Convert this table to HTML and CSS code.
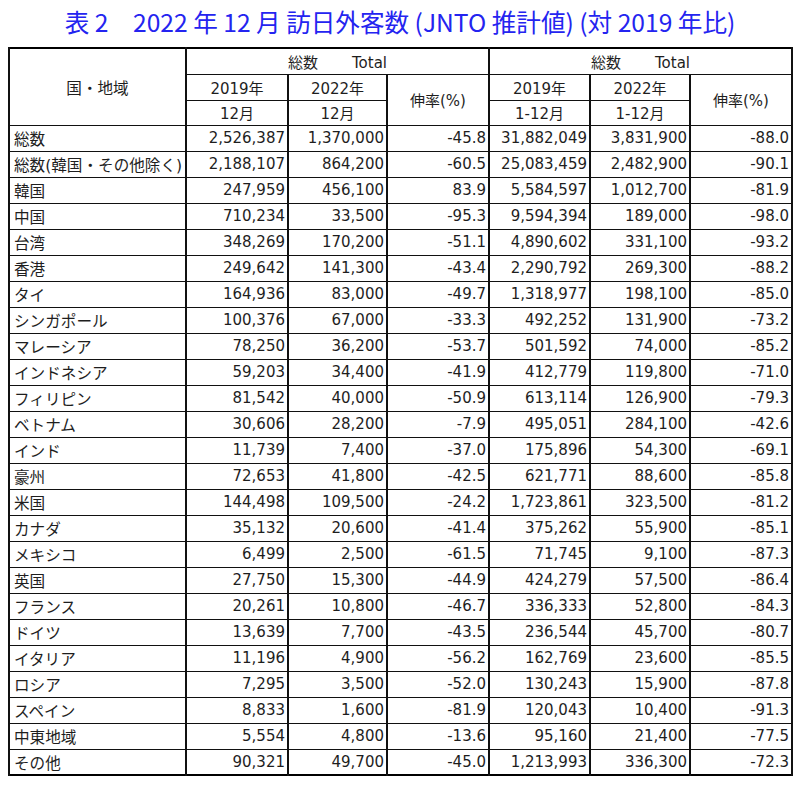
FILE: index.html
```html
<!DOCTYPE html>
<html lang="ja">
<head>
<meta charset="utf-8">
<title>表2 訪日外客数</title>
<link rel="stylesheet" href="styles.css">
</head>
<body>
<h1 class="title">表 2　2022 年 12 月 訪日外客数 (JNTO 推計値) (対 2019 年比)</h1>
<table class="stats">
<colgroup>
<col class="c-name"><col class="c-a"><col class="c-b"><col class="c-c"><col class="c-d"><col class="c-e"><col class="c-f">
</colgroup>
<thead>
<tr class="h1">
<th rowspan="3" class="name-h">国・地域</th>
<th colspan="3" class="grp">総数<span class="total">Total</span></th>
<th colspan="3" class="grp">総数<span class="total">Total</span></th>
</tr>
<tr class="h2">
<th>2019年</th><th>2022年</th><th rowspan="2">伸率(%)</th>
<th>2019年</th><th>2022年</th><th rowspan="2">伸率(%)</th>
</tr>
<tr class="h3">
<th>12月</th><th>12月</th>
<th>1-12月</th><th>1-12月</th>
</tr>
</thead>
<tbody>
<tr><td>総数</td><td>2,526,387</td><td>1,370,000</td><td>-45.8</td><td>31,882,049</td><td>3,831,900</td><td>-88.0</td></tr>
<tr><td>総数(韓国・その他除く)</td><td>2,188,107</td><td>864,200</td><td>-60.5</td><td>25,083,459</td><td>2,482,900</td><td>-90.1</td></tr>
<tr><td>韓国</td><td>247,959</td><td>456,100</td><td>83.9</td><td>5,584,597</td><td>1,012,700</td><td>-81.9</td></tr>
<tr><td>中国</td><td>710,234</td><td>33,500</td><td>-95.3</td><td>9,594,394</td><td>189,000</td><td>-98.0</td></tr>
<tr><td>台湾</td><td>348,269</td><td>170,200</td><td>-51.1</td><td>4,890,602</td><td>331,100</td><td>-93.2</td></tr>
<tr><td>香港</td><td>249,642</td><td>141,300</td><td>-43.4</td><td>2,290,792</td><td>269,300</td><td>-88.2</td></tr>
<tr><td>タイ</td><td>164,936</td><td>83,000</td><td>-49.7</td><td>1,318,977</td><td>198,100</td><td>-85.0</td></tr>
<tr><td>シンガポール</td><td>100,376</td><td>67,000</td><td>-33.3</td><td>492,252</td><td>131,900</td><td>-73.2</td></tr>
<tr><td>マレーシア</td><td>78,250</td><td>36,200</td><td>-53.7</td><td>501,592</td><td>74,000</td><td>-85.2</td></tr>
<tr><td>インドネシア</td><td>59,203</td><td>34,400</td><td>-41.9</td><td>412,779</td><td>119,800</td><td>-71.0</td></tr>
<tr><td>フィリピン</td><td>81,542</td><td>40,000</td><td>-50.9</td><td>613,114</td><td>126,900</td><td>-79.3</td></tr>
<tr><td>ベトナム</td><td>30,606</td><td>28,200</td><td>-7.9</td><td>495,051</td><td>284,100</td><td>-42.6</td></tr>
<tr><td>インド</td><td>11,739</td><td>7,400</td><td>-37.0</td><td>175,896</td><td>54,300</td><td>-69.1</td></tr>
<tr><td>豪州</td><td>72,653</td><td>41,800</td><td>-42.5</td><td>621,771</td><td>88,600</td><td>-85.8</td></tr>
<tr><td>米国</td><td>144,498</td><td>109,500</td><td>-24.2</td><td>1,723,861</td><td>323,500</td><td>-81.2</td></tr>
<tr><td>カナダ</td><td>35,132</td><td>20,600</td><td>-41.4</td><td>375,262</td><td>55,900</td><td>-85.1</td></tr>
<tr><td>メキシコ</td><td>6,499</td><td>2,500</td><td>-61.5</td><td>71,745</td><td>9,100</td><td>-87.3</td></tr>
<tr><td>英国</td><td>27,750</td><td>15,300</td><td>-44.9</td><td>424,279</td><td>57,500</td><td>-86.4</td></tr>
<tr><td>フランス</td><td>20,261</td><td>10,800</td><td>-46.7</td><td>336,333</td><td>52,800</td><td>-84.3</td></tr>
<tr><td>ドイツ</td><td>13,639</td><td>7,700</td><td>-43.5</td><td>236,544</td><td>45,700</td><td>-80.7</td></tr>
<tr><td>イタリア</td><td>11,196</td><td>4,900</td><td>-56.2</td><td>162,769</td><td>23,600</td><td>-85.5</td></tr>
<tr><td>ロシア</td><td>7,295</td><td>3,500</td><td>-52.0</td><td>130,243</td><td>15,900</td><td>-87.8</td></tr>
<tr><td>スペイン</td><td>8,833</td><td>1,600</td><td>-81.9</td><td>120,043</td><td>10,400</td><td>-91.3</td></tr>
<tr><td>中東地域</td><td>5,554</td><td>4,800</td><td>-13.6</td><td>95,160</td><td>21,400</td><td>-77.5</td></tr>
<tr><td>その他</td><td>90,321</td><td>49,700</td><td>-45.0</td><td>1,213,993</td><td>336,300</td><td>-72.3</td></tr>
</tbody>
</table>
</body>
</html>
```

FILE: styles.css
```css
html, body {
  margin: 0;
  padding: 0;
  background: #fff;
}

body {
  font-family: "DejaVu Sans", "Noto Sans CJK JP", sans-serif;
  color: #1e1e1e;
}

.title {
  margin: 0;
  height: 47px;
  line-height: 43px;
  text-align: center;
  font-family: "Noto Sans CJK JP", sans-serif;
  font-weight: normal;
  font-size: 24.6px;
  color: #2424f0;
  white-space: pre;
}

.stats {
  margin-left: 8px;
  width: 783px;
  table-layout: fixed;
  border-collapse: collapse;
  border: 2px solid #000;
  font-size: 15px;
}

.c-name { width: 177px; }
.c-a { width: 102px; }
.c-b { width: 99px; }
.c-c { width: 102px; }
.c-d { width: 101px; }
.c-e { width: 100px; }
.c-f { width: 102px; }

.stats th,
.stats td {
  border-top: 1px solid #111;
  border-bottom: 1px solid #111;
  border-left: 2px solid #111;
  border-right: 2px solid #111;
  padding: 0 3px;
  white-space: nowrap;
  overflow: hidden;
}

.stats th {
  font-weight: normal;
  text-align: center;
  vertical-align: middle;
}

.stats thead tr { height: 26px; }
.stats thead tr.h3 { height: 25px; }

.stats tbody tr { height: 26px; }

.stats td {
  text-align: right;
  vertical-align: middle;
  padding: 0 2px 0 3px;
}

.stats tbody td:first-child {
  text-align: left;
  padding-left: 4px;
  font-size: 15.6px;
  font-family: "DejaVu Sans", "Noto Sans CJK JP", sans-serif;
}

.name-h {
  font-family: "Noto Sans CJK JP", sans-serif;
  font-size: 15.6px;
}

.total {
  margin-left: 34px;
}
```
